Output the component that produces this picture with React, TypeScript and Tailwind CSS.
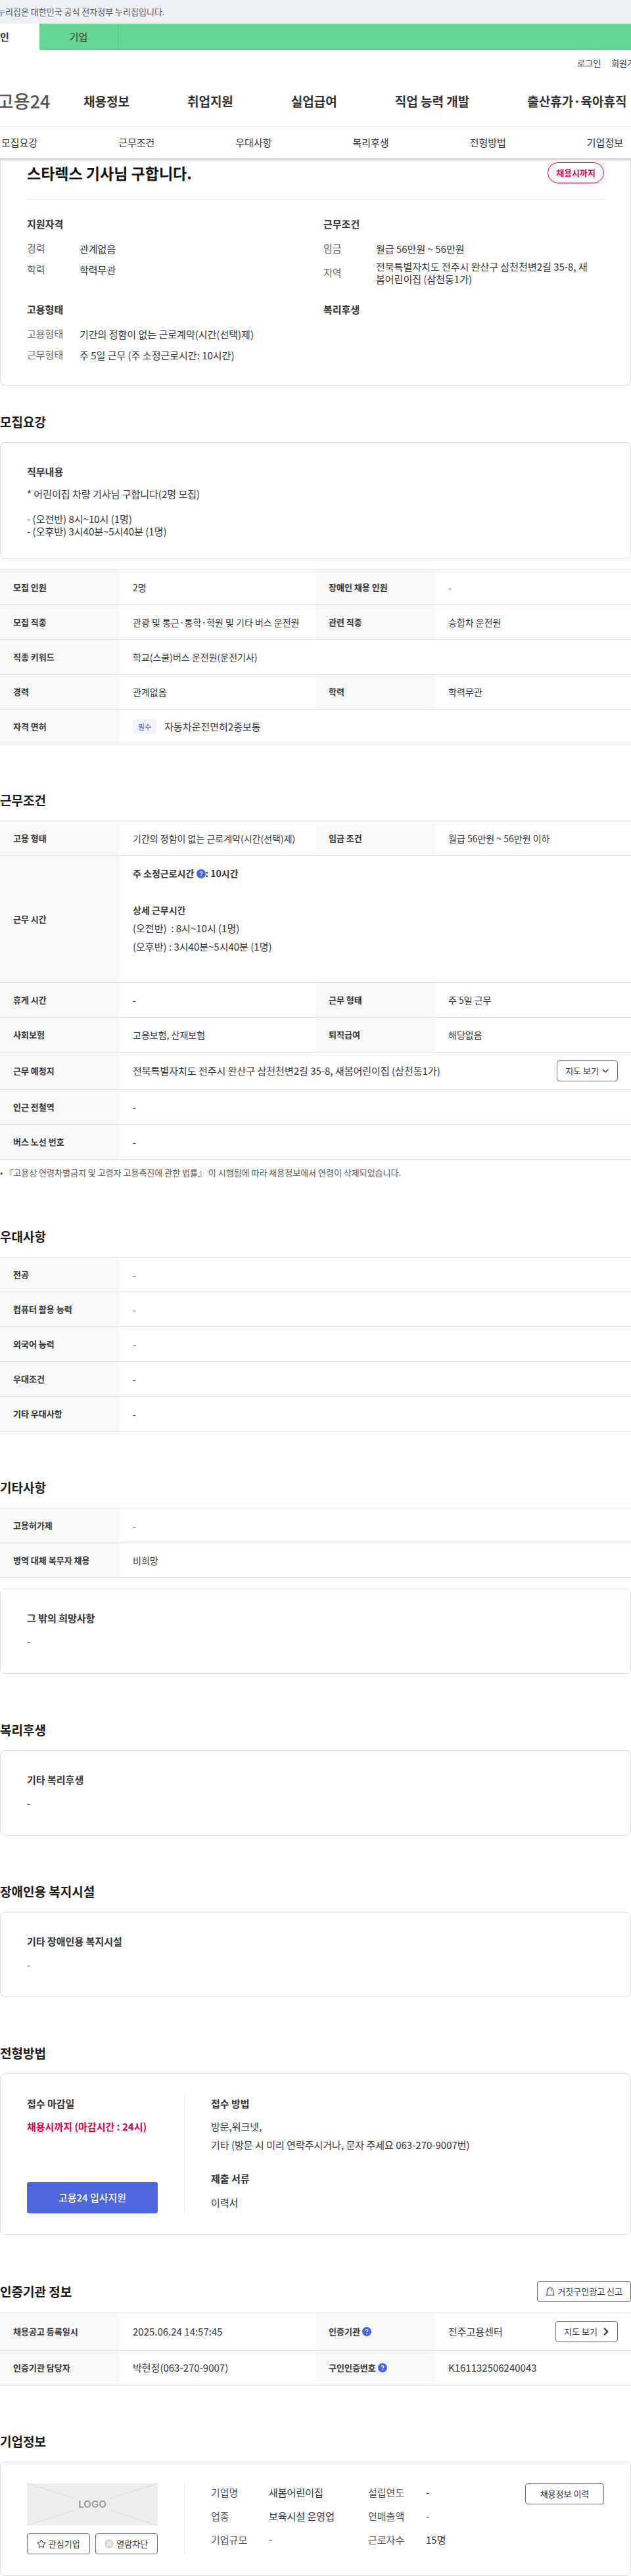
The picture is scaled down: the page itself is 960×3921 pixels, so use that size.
import React from "react";
import { ChevronDown, ChevronRight, Star } from "lucide-react";

type Cell = { label: React.ReactNode; value: React.ReactNode };

const mainMenu = ["채용정보", "취업지원", "실업급여", "직업 능력 개발", "출산휴가·육아휴직"];
const sectionMenu = ["모집요강", "근무조건", "우대사항", "복리후생", "전형방법", "기업정보"];

function HelpButton({ label }: { label: string }) {
  return (
    <button type="button" aria-label={label} className="inline-block h-3.5 w-3.5 align-[-2px]">
      <svg viewBox="0 0 14 14" className="block h-3.5 w-3.5">
        <circle cx="7" cy="7" r="7" fill="#4a63e0" />
        <path
          d="M5.2 5.6c0-1 .8-1.7 1.8-1.7s1.8.7 1.8 1.6c0 .7-.4 1.1-.9 1.4-.5.3-.8.5-.8 1.1"
          fill="none"
          stroke="#fff"
          strokeWidth="1.2"
        />
        <circle cx="7.1" cy="9.7" r=".8" fill="#fff" />
      </svg>
    </button>
  );
}

function SirenIcon() {
  return (
    <svg viewBox="0 0 14 14" className="h-3.5 w-3.5" fill="none" stroke="#333" strokeWidth="1.1">
      <path d="M2.3 12.4V6.2C2.3 3.5 4.3 1.4 7 1.4s4.7 2.1 4.7 4.8v6.2" />
      <path d="M.6 12.4h12.8" />
      <path d="M7.6 3.8c1 .2 1.6.9 1.7 1.8" />
    </svg>
  );
}

function BlockIcon() {
  return (
    <svg viewBox="0 0 14 14" className="h-3.5 w-3.5">
      <circle cx="7" cy="7" r="7" fill="#d8d8d8" />
      <path d="M4.2 4.2l5.6 5.6M9.8 4.2L4.2 9.8" stroke="#fff" strokeWidth="1.4" />
    </svg>
  );
}

function OutlineButton({ children, className = "" }: { children: React.ReactNode; className?: string }) {
  return (
    <button
      type="button"
      className={`inline-flex h-8 shrink-0 items-center justify-center gap-1 rounded border border-[#6d6d6d] bg-white text-[13px] whitespace-nowrap text-[#333] ${className}`}
    >
      {children}
    </button>
  );
}

function Section({ title, action, children }: { title: string; action?: React.ReactNode; children: React.ReactNode }) {
  return (
    <section className="mt-[70px]">
      <div className="mb-4 flex items-center justify-between">
        <h2 className="text-[19px] leading-[30px] font-bold text-[#1a1a1a]">{title}</h2>
        {action}
      </div>
      {children}
    </section>
  );
}

function Card({ children, className = "" }: { children: React.ReactNode; className?: string }) {
  return <div className={`rounded-lg border border-[#dcdcdc] px-10 py-8 ${className}`}>{children}</div>;
}

function NoteCard({ title, className = "" }: { title: string; className?: string }) {
  return (
    <Card className={className}>
      <h3 className="leading-6 font-bold">{title}</h3>
      <p className="mt-2 leading-8">-</p>
    </Card>
  );
}

// rows with one cell stretch their value over the whole width
function InfoTable({ rows }: { rows: Cell[][] }) {
  return (
    <table className="w-full table-fixed border-t border-[#dcdcdc] text-left">
      <colgroup>
        <col className="w-[182px]" />
        <col />
        <col className="w-[182px]" />
        <col />
      </colgroup>
      <tbody>
        {rows.map((row, i) => (
          <tr key={i} className="border-b border-[#dcdcdc]">
            {row.map((cell, j) => (
              <React.Fragment key={j}>
                <th scope="row" className="bg-[#f8f8f8] px-5 py-3 text-[13px] leading-7 font-bold">
                  {cell.label}
                </th>
                <td colSpan={row.length === 1 ? 3 : 1} className="px-5 py-3 text-[14px] leading-7">
                  {cell.value}
                </td>
              </React.Fragment>
            ))}
          </tr>
        ))}
      </tbody>
    </table>
  );
}

function SummaryItem({ label, children }: { label: string; children: React.ReactNode }) {
  return (
    <div className="flex min-h-6 items-center">
      <dt className="w-20 shrink-0 text-[#666]">{label}</dt>
      <dd className="pr-4 leading-[19px]">{children}</dd>
    </div>
  );
}

function Header() {
  return (
    <header className="relative overflow-hidden bg-white whitespace-nowrap shadow-[0_2px_4px_rgba(0,0,0,0.25)]">
      <div className="flex h-9 items-center bg-[#ecf0f5] text-[13px] text-[#555]">
        <p className="-ml-1">누리집은 대한민국 공식 전자정부 누리집입니다.</p>
      </div>
      <div className="flex h-10 bg-[#63d594]">
        <a href="#person" className="flex w-15 items-center bg-white font-bold">
          인
        </a>
        <a href="#company" className="flex w-[120px] items-center justify-center border-r border-[#55c688]">
          기업
        </a>
      </div>
      <div className="flex h-10 items-center justify-end gap-4 text-[13px]">
        <a href="#login">로그인</a>
        <a href="#join" className="-mr-[18px]">회원가입</a>
      </div>
      <div className="flex h-[77px] items-center border-b border-[#ececec]">
        <a href="#home" className="-ml-1 w-[131px] shrink-0 text-[27px] font-medium text-[#555]">고용24</a>
        <nav className="flex gap-[88px] text-[19px] font-bold">
          {mainMenu.map((item) => (
            <a key={item} href="#menu">{item}</a>
          ))}
        </nav>
      </div>
      <nav className="flex h-12 items-center justify-between pr-3 pl-0.5">
        {sectionMenu.map((item) => (
          <a key={item} href={`#${item}`}>{item}</a>
        ))}
      </nav>
    </header>
  );
}

const recruitRows: Cell[][] = [
  [{ label: "모집 인원", value: "2명" }, { label: "장애인 채용 인원", value: "-" }],
  [{ label: "모집 직종", value: "관광 및 통근·통학·학원 및 기타 버스 운전원" }, { label: "관련 직종", value: "승합차 운전원" }],
  [{ label: "직종 키워드", value: "학교(스쿨)버스 운전원(운전기사)" }],
  [{ label: "경력", value: "관계없음" }, { label: "학력", value: "학력무관" }],
  [
    {
      label: "자격 면허",
      value: (
        <div className="flex items-center gap-3 text-[15px]">
          <span className="rounded bg-[#f1f2fe] px-2 text-[11px] leading-[22px] text-[#4a63e0]">필수</span>
          자동차운전면허2종보통
        </div>
      ),
    },
  ],
];

const workRows: Cell[][] = [
  [{ label: "고용 형태", value: "기간의 정함이 없는 근로계약(시간(선택)제)" }, { label: "임금 조건", value: "월급 56만원 ~ 56만원 이하" }],
  [
    {
      label: "근무 시간",
      value: (
        <div className="pb-7">
          <p className="font-bold">
            주 소정근로시간 <HelpButton label="주 소정근로시간 안내" />: 10시간
          </p>
          <p className="mt-7 font-bold">상세 근무시간</p>
          <p className="text-[15px]">(오전반)&nbsp; : 8시~10시 (1명)</p>
          <p className="text-[15px]">(오후반) : 3시40분~5시40분 (1명)</p>
        </div>
      ),
    },
  ],
  [{ label: "휴게 시간", value: "-" }, { label: "근무 형태", value: "주 5일 근무" }],
  [{ label: "사회보험", value: "고용보험, 산재보험" }, { label: "퇴직급여", value: "해당없음" }],
  [
    {
      label: "근무 예정지",
      value: (
        <div className="flex items-center justify-between text-[15px]">
          전북특별자치도 전주시 완산구 삼천천변2길 35-8, 새봄어린이집 (삼천동1가)
          <OutlineButton className="px-3">
            지도 보기
            <ChevronDown className="-mx-0.5 h-4 w-4" />
          </OutlineButton>
        </div>
      ),
    },
  ],
  [{ label: "인근 전철역", value: "-" }],
  [{ label: "버스 노선 번호", value: "-" }],
];

const preferRows: Cell[][] = ["전공", "컴퓨터 활용 능력", "외국어 능력", "우대조건", "기타 우대사항"].map((label) => [
  { label, value: "-" },
]);

const etcRows: Cell[][] = [
  [{ label: "고용허가제", value: "-" }],
  [{ label: "병역 대체 복무자 채용", value: "비희망" }],
];

const agencyRows: Cell[][] = [
  [
    { label: "채용공고 등록일시", value: <span className="text-[15px]">2025.06.24 14:57:45</span> },
    {
      label: <>인증기관 <HelpButton label="인증기관 안내" /></>,
      value: (
        <div className="flex items-center justify-between text-[15px]">
          전주고용센터
          <OutlineButton className="px-3">
            지도 보기
            <ChevronRight className="-mr-1 h-[18px] w-[18px]" strokeWidth={3} />
          </OutlineButton>
        </div>
      ),
    },
  ],
  [
    { label: "인증기관 담당자", value: <span className="text-[15px]">박현정(063-270-9007)</span> },
    {
      label: <>구인인증번호 <HelpButton label="구인인증번호 안내" /></>,
      value: <span className="text-[15px]">K161132506240043</span>,
    },
  ],
];

const companyInfo = [
  ["기업명", "새봄어린이집"],
  ["설립연도", "-"],
  ["업종", "보육시설 운영업"],
  ["연매출액", "-"],
  ["기업규모", "-"],
  ["근로자수", "15명"],
];

export default function App() {
  return (
    <div className="w-full overflow-hidden bg-white font-['Noto_Sans_CJK_KR',sans-serif] text-[15px] text-[#333]">
      <Header />

      <main>
        <div className="rounded-b-lg border border-t-0 border-[#dcdcdc] px-10 pt-1.5 pb-[34px]">
          <div className="flex items-center justify-between border-b border-[#ececec] pb-6">
            <h1 className="text-[23px] leading-8 font-bold text-[#111]">스타렉스 기사님 구합니다.</h1>
            <span className="h-8 rounded-full border border-[#d9004f] px-3 text-[13px] leading-[30px] font-bold text-[#d9004f]">
              채용시까지
            </span>
          </div>
          <div className="mt-6 grid grid-cols-[451fr_427fr] gap-y-6">
            <section>
              <h2 className="leading-[26px] font-bold">지원자격</h2>
              <dl className="mt-3 flex flex-col gap-2">
                <SummaryItem label="경력">관계없음</SummaryItem>
                <SummaryItem label="학력">학력무관</SummaryItem>
              </dl>
            </section>
            <section>
              <h2 className="leading-[26px] font-bold">근무조건</h2>
              <dl className="mt-3 flex flex-col gap-1.5">
                <SummaryItem label="임금">월급 56만원 ~ 56만원</SummaryItem>
                <SummaryItem label="지역">
                  전북특별자치도 전주시 완산구 삼천천변2길 35-8, 새봄어린이집 (삼천동1가)
                </SummaryItem>
              </dl>
            </section>
            <section>
              <h2 className="leading-[26px] font-bold">고용형태</h2>
              <dl className="mt-3 flex flex-col gap-2">
                <SummaryItem label="고용형태">기간의 정함이 없는 근로계약(시간(선택)제)</SummaryItem>
                <SummaryItem label="근무형태">주 5일 근무 (주 소정근로시간: 10시간)</SummaryItem>
              </dl>
            </section>
            <section>
              <h2 className="leading-[26px] font-bold">복리후생</h2>
            </section>
          </div>
        </div>

        <div className="-mt-[30px]">
          <Section title="모집요강">
            <Card className="mb-4">
              <h3 className="leading-6 font-bold">직무내용</h3>
              <p className="mt-3 leading-[19px] whitespace-pre-line">
                {"* 어린이집 차량 기사님 구합니다(2명 모집)\n\n- (오전반) 8시~10시 (1명)\n- (오후반) 3시40분~5시40분 (1명)"}
              </p>
            </Card>
            <InfoTable rows={recruitRows} />
          </Section>
        </div>

        <Section title="근무조건">
          <InfoTable rows={workRows} />
          <p className="mt-2 text-[13px] leading-6 text-[#555]">
            • 『고용상 연령차별금지 및 고령자 고용촉진에 관한 법률』 이 시행됨에 따라 채용정보에서 연령이 삭제되었습니다.
          </p>
        </Section>

        <Section title="우대사항">
          <InfoTable rows={preferRows} />
        </Section>

        <Section title="기타사항">
          <InfoTable rows={etcRows} />
          <NoteCard title="그 밖의 희망사항" className="mt-4" />
        </Section>

        <Section title="복리후생">
          <NoteCard title="기타 복리후생" />
        </Section>

        <Section title="장애인용 복지시설">
          <NoteCard title="기타 장애인용 복지시설" />
        </Section>

        <Section title="전형방법">
          <Card className="flex">
            <div className="flex w-60 shrink-0 flex-col border-r border-[#ececec] pr-10">
              <h3 className="leading-[26px] font-bold">접수 마감일</h3>
              <p className="mt-2 leading-7 font-bold text-[#d9004f]">채용시까지 (마감시간 : 24시)</p>
              <button type="button" className="mt-auto h-12 rounded bg-[#4e65e0] font-medium text-white">
                고용24 입사지원
              </button>
            </div>
            <div className="pl-10">
              <h3 className="leading-[26px] font-bold">접수 방법</h3>
              <p className="mt-2 leading-7">방문,워크넷,</p>
              <p className="leading-7">기타 (방문 시 미리 연락주시거나, 문자 주세요 063-270-9007번)</p>
              <h3 className="mt-6 leading-[26px] font-bold">제출 서류</h3>
              <p className="mt-2 leading-8">이력서</p>
            </div>
          </Card>
        </Section>

        <Section
          title="인증기관 정보"
          action={
            <OutlineButton className="px-3">
              <SirenIcon />
              거짓구인광고 신고
            </OutlineButton>
          }
        >
          <InfoTable rows={agencyRows} />
        </Section>

        <Section title="기업정보">
          <Card className="flex">
            <div className="w-60 shrink-0 border-r border-[#ececec] pr-10">
              <div className="relative flex h-16 items-center justify-center bg-[#ededed]">
                <svg viewBox="0 0 199 64" preserveAspectRatio="none" className="absolute inset-0 h-full w-full" stroke="#d8d8d8">
                  <path d="M0 0L72 23M199 0L127 23M0 64L72 41M199 64L127 41" />
                </svg>
                <span className="relative font-['Inter',sans-serif] font-semibold text-[#999]">LOGO</span>
              </div>
              <div className="mt-3 grid grid-cols-2 gap-2">
                <OutlineButton>
                  <Star className="h-3.5 w-3.5 text-[#555]" />
                  관심기업
                </OutlineButton>
                <OutlineButton>
                  <BlockIcon />
                  열람차단
                </OutlineButton>
              </div>
            </div>
            <dl className="grid grid-cols-[239px_auto] content-start gap-y-2 pl-10">
              {companyInfo.map(([label, value]) => (
                <div key={label} className="flex leading-7">
                  <dt className="w-22 shrink-0 text-[#555]">{label}</dt>
                  <dd>{value}</dd>
                </div>
              ))}
            </dl>
            <OutlineButton className="ml-auto w-30">채용정보 이력</OutlineButton>
          </Card>
        </Section>
      </main>
    </div>
  );
}
